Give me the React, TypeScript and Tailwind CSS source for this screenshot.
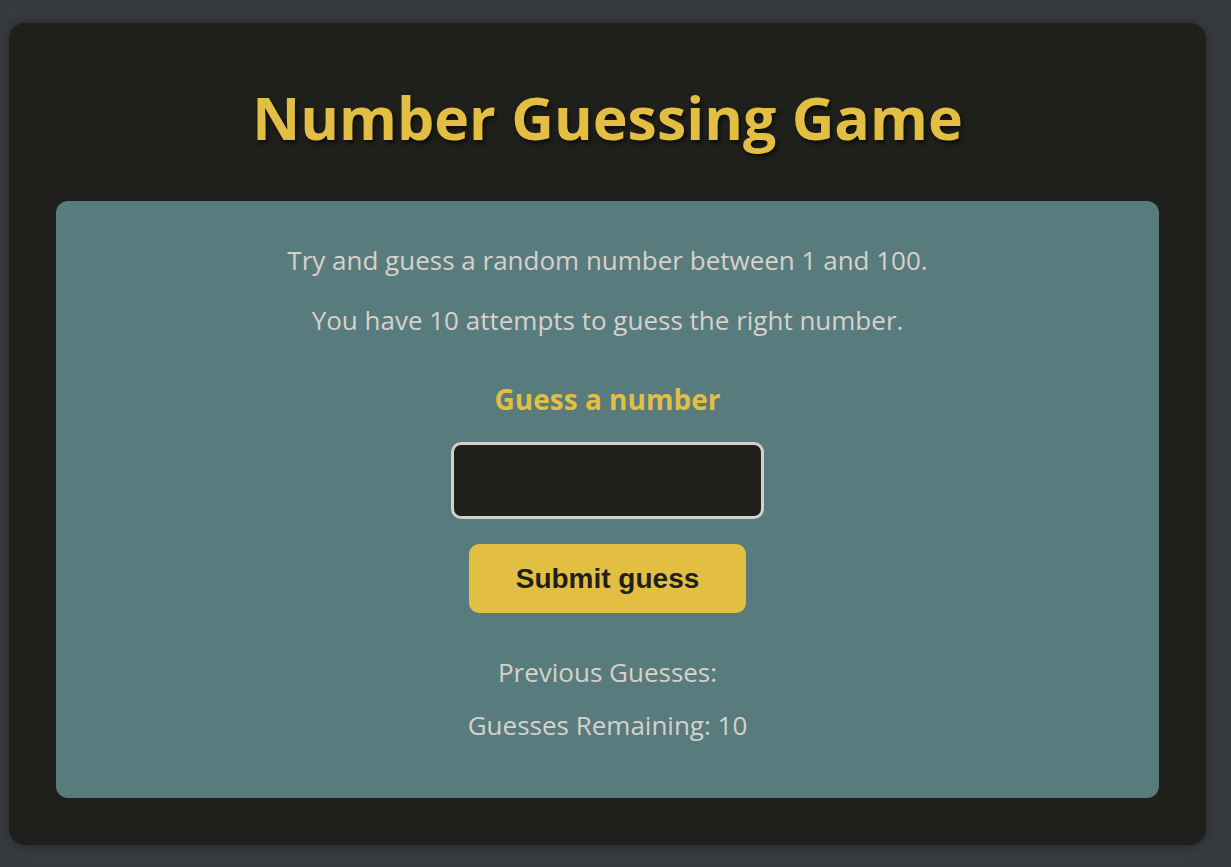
import React from "react";

export default function App() {
  return (
    <div className="min-h-[867px] w-full bg-[#373b40] pt-[23px] pl-[9px] pr-[25px] pb-[22px]" style={{ fontFamily: '"Open Sans", "Noto Sans", sans-serif' }}>
      <div className="h-[822px] rounded-[16px] bg-[#1f1f1b] shadow-[0_0_12px_rgba(0,0,0,0.35)] px-[47px] pt-[58px]">
        <h1 className="text-center text-[59px] leading-[72px] font-bold text-[#e2bf42] [text-shadow:2px_3px_4px_rgba(0,0,0,0.6)]">
          Number Guessing Game
        </h1>
        <div className="mt-[48px] h-[597px] rounded-[12px] bg-[#587b7e] pt-[41px] flex flex-col items-center text-[#d6d2cb] text-[26px]">
          <p className="leading-[36px]">Try and guess a random number between 1 and 100.</p>
          <p className="mt-[24px] leading-[36px]">You have 10 attempts to guess the right number.</p>
          <label className="mt-[43px] leading-[36px] font-bold text-[#e2bf42] text-[28px]">Guess a number</label>
          <input type="text" className="mt-[25px] w-[313px] h-[77px] rounded-[10px] border-[3px] border-[#d3cfc9] bg-[#1f1f1b] outline-none" />
          <button className="mt-[25px] w-[277px] h-[69px] rounded-[10px] bg-[#e2bf42] text-[#1f1f1b] text-[28px] font-bold" style={{ fontFamily: '"Liberation Sans", Arial, sans-serif' }}>
            Submit guess
          </button>
          <p className="mt-[41px] leading-[36px]">Previous Guesses:</p>
          <p className="mt-[17px] leading-[36px]">Guesses Remaining: 10</p>
        </div>
      </div>
    </div>
  );
}
